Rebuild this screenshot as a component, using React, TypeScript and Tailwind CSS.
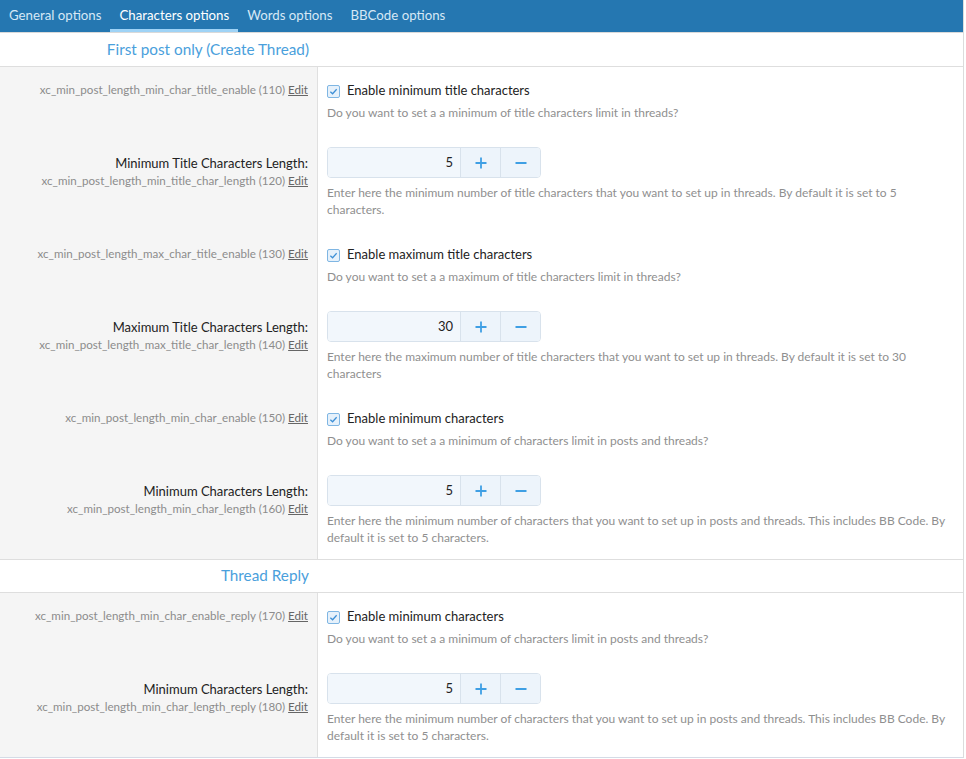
import React from "react";

type Row =
  | { kind: "check"; hint: string; label: string; desc: string }
  | { kind: "number"; title: string; hint: string; value: number; desc: string };

const sections: { title: string; rows: Row[] }[] = [
  {
    title: "First post only (Create Thread)",
    rows: [
      {
        kind: "check",
        hint: "xc_min_post_length_min_char_title_enable (110)",
        label: "Enable minimum title characters",
        desc: "Do you want to set a a minimum of title characters limit in threads?",
      },
      {
        kind: "number",
        title: "Minimum Title Characters Length:",
        hint: "xc_min_post_length_min_title_char_length (120)",
        value: 5,
        desc: "Enter here the minimum number of title characters that you want to set up in threads. By default it is set to 5 characters.",
      },
      {
        kind: "check",
        hint: "xc_min_post_length_max_char_title_enable (130)",
        label: "Enable maximum title characters",
        desc: "Do you want to set a a maximum of title characters limit in threads?",
      },
      {
        kind: "number",
        title: "Maximum Title Characters Length:",
        hint: "xc_min_post_length_max_title_char_length (140)",
        value: 30,
        desc: "Enter here the maximum number of title characters that you want to set up in threads. By default it is set to 30 characters",
      },
      {
        kind: "check",
        hint: "xc_min_post_length_min_char_enable (150)",
        label: "Enable minimum characters",
        desc: "Do you want to set a a minimum of characters limit in posts and threads?",
      },
      {
        kind: "number",
        title: "Minimum Characters Length:",
        hint: "xc_min_post_length_min_char_length (160)",
        value: 5,
        desc: "Enter here the minimum number of characters that you want to set up in posts and threads. This includes BB Code. By default it is set to 5 characters.",
      },
    ],
  },
  {
    title: "Thread Reply",
    rows: [
      {
        kind: "check",
        hint: "xc_min_post_length_min_char_enable_reply (170)",
        label: "Enable minimum characters",
        desc: "Do you want to set a a minimum of characters limit in posts and threads?",
      },
      {
        kind: "number",
        title: "Minimum Characters Length:",
        hint: "xc_min_post_length_min_char_length_reply (180)",
        value: 5,
        desc: "Enter here the minimum number of characters that you want to set up in posts and threads. This includes BB Code. By default it is set to 5 characters.",
      },
    ],
  },
];

const tabs = ["General options", "Characters options", "Words options", "BBCode options"];

function Hint({ text }: { text: string }) {
  return (
    <div className="text-[11.6px] leading-[17px] text-[#8c8c8c]">
      {text} <span className="text-[#666] underline">Edit</span>
    </div>
  );
}

function Checkbox() {
  return (
    <span className="flex h-[13px] w-[13px] items-center justify-center rounded-[2px] border border-[#7fb6e3] bg-[#e6f1fb]">
      <svg viewBox="0 0 10 10" className="h-[9px] w-[9px]">
        <path d="M1.5 5.2 L4 7.5 L8.5 2.5" fill="none" stroke="#3d8fd6" strokeWidth="1.4" />
      </svg>
    </span>
  );
}

function Plus() {
  return (
    <svg viewBox="0 0 12 12" className="h-[12px] w-[12px]">
      <path d="M6 0.5 V11.5 M0.5 6 H11.5" stroke="#3f9fe4" strokeWidth="1.8" />
    </svg>
  );
}

function Minus() {
  return (
    <svg viewBox="0 0 12 12" className="h-[12px] w-[12px]">
      <path d="M0.5 6 H11.5" stroke="#3f9fe4" strokeWidth="1.8" />
    </svg>
  );
}

function SettingRow({ row }: { row: Row }) {
  return (
    <div className="flex">
      <div
        className={
          row.kind === "check"
            ? "w-[318px] shrink-0 border-r border-[#e0e0e0] bg-[#f5f5f5] pt-[14px] pr-[9px] text-right"
            : "w-[318px] shrink-0 border-r border-[#e0e0e0] bg-[#f5f5f5] pt-[22px] pr-[9px] text-right"
        }
      >
        {row.kind === "check" ? (
          <Hint text={row.hint} />
        ) : (
          <>
            <div className="text-[13px] leading-[18px] text-[#222]">{row.title}</div>
            <Hint text={row.hint} />
          </>
        )}
      </div>
      {row.kind === "check" ? (
        <div className="flex-1 pt-[15px] pb-[11px] pl-[9px] pr-[12px]">
          <div className="flex h-[18px] items-center gap-[7px]">
            <Checkbox />
            <span className="text-[13px] text-[#222]">{row.label}</span>
          </div>
          <p className="mt-[4px] text-[12px] leading-[17px] text-[#8f8f8f]">{row.desc}</p>
        </div>
      ) : (
        <div className="flex-1 pt-[15px] pb-[13px] pl-[9px] pr-[12px]">
          <div className="flex h-[31px] w-[214px] overflow-hidden rounded-[4px] border border-[#d8e2ec]">
            <div className="flex flex-1 items-center justify-end bg-[#f2f7fc] pr-[7px] text-[13px] text-[#222]">
              {row.value}
            </div>
            <div className="flex w-[40px] items-center justify-center border-l border-[#d8e2ec] bg-[#edf4fb]">
              <Plus />
            </div>
            <div className="flex w-[40px] items-center justify-center border-l border-[#d8e2ec] bg-[#edf4fb]">
              <Minus />
            </div>
          </div>
          <p className="mt-[6px] text-[12px] leading-[17px] text-[#8f8f8f]">{row.desc}</p>
        </div>
      )}
    </div>
  );
}

export default function App() {
  return (
    <div
      className="h-[759px] w-[966px] overflow-hidden bg-white"
      style={{ fontFamily: "Lato, 'Noto Sans', sans-serif" }}
    >
      <div className="mr-[2px] border-r border-[#dcdcdc]">
        <div className="flex h-[32px] items-stretch bg-[#2577b1]">
          {tabs.map((t, i) => (
            <div
              key={t}
              className={
                i === 1
                  ? "flex items-center border-b-[3px] border-[#9fd3f6] px-[9px] pt-[2px] text-[13.25px] text-white"
                  : "flex items-center px-[9px] pb-[1px] text-[13.25px] text-[#d6e8f6]"
              }
            >
              {t}
            </div>
          ))}
        </div>
        <div className="h-[1px] bg-[#d9d9d9]" />
        {sections.map((s, si) => (
          <div key={s.title}>
            <div
              className={
                si === 0
                  ? "flex h-[34px] border-b border-[#dedede]"
                  : "flex h-[34px] border-y border-[#dedede]"
              }
            >
              <div className="flex w-[318px] items-center justify-end pb-[1px] pr-[9px] text-[15.3px] text-[#4aa0dc]">
                {s.title}
              </div>
            </div>
            {s.rows.map((r, i) => (
              <SettingRow key={i} row={r} />
            ))}
          </div>
        ))}
        <div className="h-[1px] bg-[#d4dbe6]" />
      </div>
    </div>
  );
}
